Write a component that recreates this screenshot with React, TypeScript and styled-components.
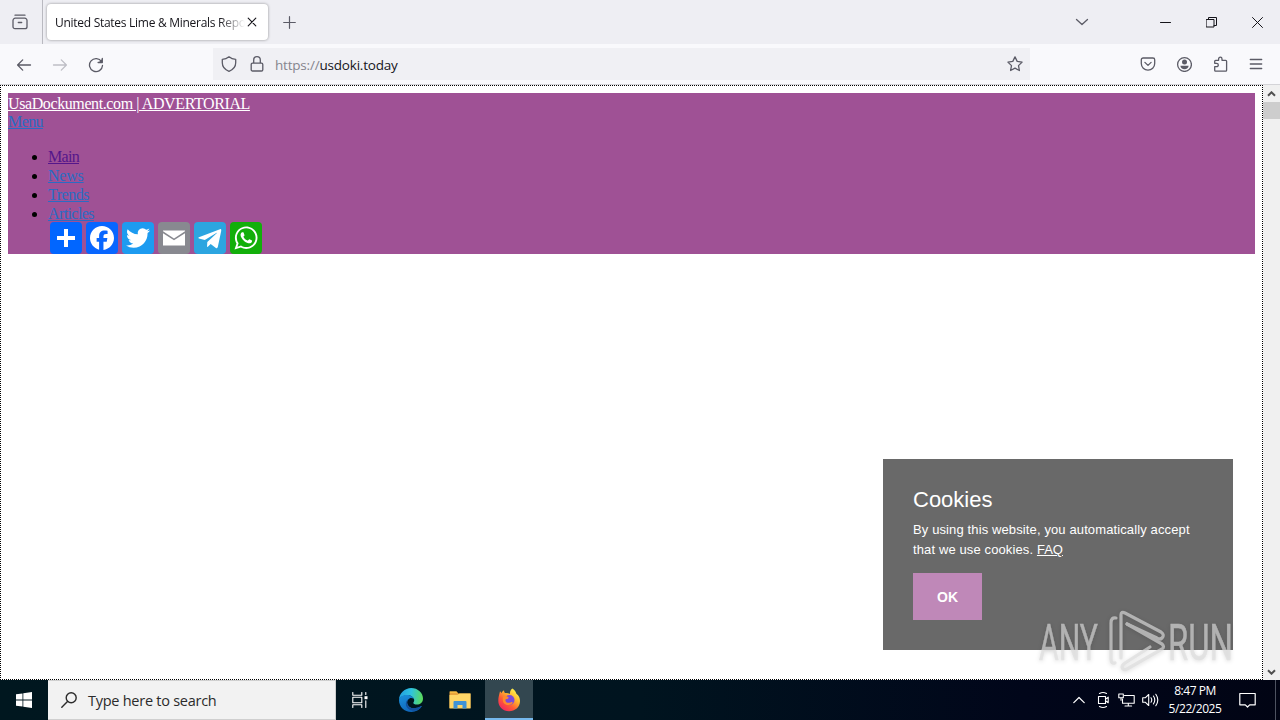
import { ReactNode } from "react";
import styled, { createGlobalStyle, css } from "styled-components";

const GlobalStyle = createGlobalStyle`
  * {
    box-sizing: border-box;
  }

  body {
    margin: 0;
    overflow: hidden;
  }

  svg {
    display: block;
    flex: none;
  }
`;

const Desktop = styled.div`
  display: flex;
  flex-direction: column;
  width: 1280px;
  height: 720px;
  background: #fff;
  font-family: "Open Sans", sans-serif;
`;

const TabBar = styled.header`
  display: flex;
  align-items: center;
  height: 44px;
  background: #eeeef3;
  color: #5b5b66;
`;

const RecentButton = styled.div`
  display: flex;
  align-items: center;
  justify-content: center;
  width: 43px;
  height: 44px;
  padding-right: 3px;
  border-right: 1px solid #b9b9c0;
`;

const Tab = styled.div`
  display: flex;
  align-items: center;
  width: 221px;
  height: 36px;
  margin-left: 4px;
  padding: 0 9px 0 8px;
  border-radius: 4px;
  background: #fff;
  box-shadow: 0 0 3px rgba(0, 0, 0, 0.4);
  color: #15141a;
`;

const TabTitle = styled.span`
  width: 190px;
  padding-top: 2px;
  white-space: nowrap;
  font-size: 12px;
  line-height: 18px;
  letter-spacing: -0.28px;
  mask-image: linear-gradient(to left, transparent, #000 26px);
`;

const NewTab = styled.div`
  margin: 1px 0 0 15px;
`;

const WindowButtons = styled.div`
  display: flex;
  align-items: center;
  margin-left: auto;
  padding-right: 17px;
  color: #15141a;
`;

const WindowButton = styled.div<{ $gap?: number }>`
  margin-left: ${({ $gap = 0 }) => $gap}px;
`;

const NavBar = styled.div`
  display: flex;
  align-items: center;
  height: 40px;
  background: #f9f9fc;
  color: #5b5b66;
`;

const NavButtons = styled.div<{ $end?: boolean }>`
  display: flex;
  align-items: center;
  gap: 20px;
  width: 213px;
  padding: 1px 0 0 16px;

  ${({ $end }) =>
    $end &&
    css`
      width: auto;
      margin-left: auto;
      padding: 0 16px 0 0;
    `}
`;

const UrlBar = styled.div`
  display: flex;
  align-items: center;
  width: 817px;
  height: 32px;
  padding: 0 7px 0 8px;
  background: #f0f0f4;
`;

const Url = styled.span`
  flex: 1;
  margin-left: 10px;
  padding-top: 2px;
  color: #85848d;
  font-size: 13.5px;
  letter-spacing: -0.2px;

  b {
    color: #15141a;
    font-weight: 400;
  }
`;

const Lock = styled.div`
  margin-left: 12px;
`;

const Viewport = styled.div`
  display: flex;
  height: 596px;
  border-top: 1px solid #d4d4d8;
`;

const Page = styled.main`
  position: relative;
  width: 1263px;
  height: 595px;
  padding: 7px 7px 0;
  border: 1px dotted #000;
  background: #fff;
  font-family: "Liberation Serif", serif;
  font-size: 16px;
`;

const SiteHeader = styled.div`
  height: 161px;
  padding-top: 1px;
  background: #9f5195;
  line-height: 19px;
`;

const Line = styled.div`
  height: 18px;
`;

const Link = styled.a<{ $color?: string; $spacing?: number }>`
  color: ${({ $color = "#2a6cc4" }) => $color};
  letter-spacing: ${({ $spacing = 0 }) => $spacing}px;
  text-decoration: underline;
  text-decoration-thickness: 1px;
`;

const Menu = styled.ul`
  margin: 17px 0 0;
  padding: 0 0 0 40px;
`;

const Share = styled.div`
  display: flex;
  gap: 4px;
  margin-top: -1px;
  padding-left: 2px;
`;

const ShareButton = styled.div<{ $bg: string }>`
  width: 32px;
  height: 32px;
  border-radius: 4px;
  background: ${({ $bg }) => $bg};
`;

const CookieBox = styled.div`
  position: absolute;
  top: 373px;
  left: 882px;
  width: 350px;
  height: 191px;
  padding: 28px 30px;
  background: #696969;
  color: #fff;
  font-family: "Liberation Sans", sans-serif;
`;

const CookieTitle = styled.h2`
  margin: 0 0 7px;
  font-size: 22px;
  font-weight: 400;
  line-height: 26px;
`;

const CookieText = styled.p`
  margin: 0 0 13px;
  font-size: 13px;
  line-height: 20px;
  letter-spacing: 0.12px;
  white-space: nowrap;
`;

const OkButton = styled.div`
  width: 69px;
  height: 47px;
  background: #bf88b8;
  font-size: 14px;
  font-weight: 700;
  line-height: 48px;
  text-align: center;
`;

const Watermark = styled.div`
  position: absolute;
  top: 520px;
  left: 1032px;
  filter: drop-shadow(0 1px 2px rgba(0, 0, 0, 0.2));
`;

const ScrollBar = styled.div`
  display: flex;
  flex-direction: column;
  align-items: center;
  justify-content: space-between;
  width: 17px;
  height: 595px;
  background: #f0f0f0;
  color: #505050;
`;

const Thumb = styled.div`
  width: 17px;
  height: 17px;
  margin-bottom: auto;
  background: #cdcdcd;
`;

const ScrollArrow = styled.div`
  display: flex;
  align-items: center;
  justify-content: center;
  width: 17px;
  height: 17px;
`;

const TaskBar = styled.footer`
  display: flex;
  align-items: center;
  height: 40px;
  background: linear-gradient(90deg, #00171f 0%, #00141f 50%, #01061a 80%, #010414 100%);
  color: #fff;
`;

const TaskButton = styled.div<{ $width?: number; $active?: boolean }>`
  display: flex;
  align-items: center;
  justify-content: center;
  width: ${({ $width = 48 }) => $width}px;
  height: 40px;

  ${({ $active }) =>
    $active &&
    css`
      margin-left: 3px;
      border-bottom: 2px solid #76b9ed;
      padding-top: 1px;
      background: #334750;
    `}
`;

const Search = styled.div`
  display: flex;
  align-items: center;
  gap: 11px;
  width: 288px;
  height: 40px;
  padding-left: 13px;
  border: 1px solid #cfcfcf;
  border-width: 1px 1px 1px 0;
  background: #f2f2f2;
  color: #2b2b2b;
  font-size: 14.5px;
  letter-spacing: -0.26px;
`;

const Tray = styled.div`
  display: flex;
  align-items: center;
  height: 40px;
  margin-left: auto;
`;

const TrayIcon = styled.div<{ $gap?: number }>`
  margin-right: ${({ $gap = 0 }) => $gap}px;
`;

const Clock = styled.div`
  width: 56px;
  margin-right: 16px;
  font-size: 12px;
  line-height: 18px;
  letter-spacing: -0.45px;
  text-align: center;
  white-space: nowrap;
`;

const ShowDesktop = styled.div`
  width: 5px;
  height: 40px;
  border-left: 1px solid #4d5260;
`;

interface IconProps {
  size?: number;
  height?: number;
  stroke?: number;
  children: ReactNode;
}

const Icon = ({ size = 16, height, stroke = 1.3, children }: IconProps) => (
  <svg
    width={size}
    height={height || size}
    viewBox={`0 0 ${size} ${height || size}`}
    fill="none"
    stroke="currentColor"
    strokeWidth={stroke}
    strokeLinecap="round"
    strokeLinejoin="round"
  >
    {children}
  </svg>
);

const menuItems = [
  { label: "Main", color: "#55168b", spacing: -0.7 },
  { label: "News", spacing: -0.2 },
  { label: "Trends", spacing: -0.5 },
  { label: "Articles", spacing: -0.6 },
];

const shareItems = [
  {
    name: "share",
    bg: "#0166ff",
    path: "M14 7h4v18h-4z M7 14h18v4H7z",
  },
  {
    name: "facebook",
    bg: "#0866ff",
    path: "M28 16c0-6.627-5.373-12-12-12S4 9.373 4 16c0 5.628 3.875 10.35 9.101 11.647v-7.98h-2.474V16H13.1v-1.58c0-4.085 1.849-5.978 5.859-5.978.76 0 2.072.15 2.608.298v3.325c-.283-.03-.775-.045-1.386-.045-1.967 0-2.728.745-2.728 2.683V16h3.92l-.673 3.667h-3.247v8.245C23.395 27.195 28 22.135 28 16",
  },
  {
    name: "twitter",
    bg: "#1d9bf0",
    path: "M28 8.557a10 10 0 0 1-2.828.775 4.93 4.93 0 0 0 2.166-2.725 9.7 9.7 0 0 1-3.13 1.194 4.92 4.92 0 0 0-3.593-1.55 4.924 4.924 0 0 0-4.794 6.049c-4.09-.21-7.72-2.17-10.15-5.15a4.94 4.94 0 0 0-.665 2.477c0 1.71.87 3.214 2.19 4.1a5 5 0 0 1-2.23-.616v.06c0 2.39 1.7 4.38 3.952 4.83-.414.115-.85.174-1.297.174q-.476-.001-.928-.086a4.935 4.935 0 0 0 4.6 3.42 9.9 9.9 0 0 1-6.114 2.107q-.597 0-1.175-.068a13.95 13.95 0 0 0 7.55 2.213c9.056 0 14.01-7.507 14.01-14.013q0-.32-.015-.637c.96-.695 1.795-1.56 2.455-2.55z",
  },
  {
    name: "email",
    bg: "#888990",
    path: "M5 8.5h22v.8l-11 7.2-11-7.2z M5 11.2l11 7.1 11-7.1V23.5H5z",
  },
  {
    name: "telegram",
    bg: "#2ca5e0",
    path: "M26.6 6.9 4.9 15.2c-.7.3-.6 1 .1 1.2l5.8 1.7L22.3 10.9c.5-.3.8 0 .4.4l-9.4 8.6-.3 5.2c.5 0 .8-.2 1.1-.5l2.6-2.5 5.2 3.9c1 .5 1.6.2 1.9-.9l3.4-16.2c.2-1.3-.1-2.1-.6-2z",
  },
  {
    name: "whatsapp",
    bg: "#12af0a",
    path: "M16.21 4.41C9.973 4.41 4.917 9.465 4.917 15.7c0 2.134.592 4.13 1.62 5.832L4.5 27.59l6.25-2.002a11.24 11.24 0 0 0 5.46 1.404c6.234 0 11.29-5.055 11.29-11.29 0-6.237-5.056-11.292-11.29-11.292m0 20.69c-1.91 0-3.69-.57-5.173-1.553l-3.61 1.156 1.173-3.49a9.35 9.35 0 0 1-1.79-5.512c0-5.18 4.217-9.4 9.4-9.4s9.397 4.22 9.397 9.4c0 5.188-4.214 9.4-9.398 9.4zm5.293-6.832c-.284-.155-1.673-.906-1.934-1.012-.265-.106-.455-.16-.658.12s-.78.91-.954 1.096c-.176.186-.345.203-.628.048-.282-.154-1.2-.494-2.264-1.517-.83-.795-1.373-1.76-1.53-2.055s0-.445.15-.584c.134-.124.3-.326.45-.488.15-.163.203-.28.306-.47.104-.19.06-.36-.005-.506-.066-.147-.59-1.587-.81-2.173-.218-.586-.46-.498-.63-.505-.168-.007-.358-.038-.55-.045-.19-.007-.51.054-.78.332-.277.274-1.05.943-1.1 2.362-.055 1.418.926 2.826 1.064 3.023.137.2 1.874 3.272 4.76 4.537 2.888 1.264 2.9.878 3.43.85.53-.027 1.734-.633 2-1.297s.287-1.24.22-1.363c-.07-.123-.26-.203-.54-.357z",
  },
];

const Tabs = () => (
  <TabBar>
    <RecentButton>
      <Icon>
        <path d="M3 1.2h10M1 6.5A2.3 2.3 0 0 1 3.3 4.2h9.4A2.3 2.3 0 0 1 15 6.5v6.2a2 2 0 0 1-2 2H3a2 2 0 0 1-2-2zM6.3 8.5h3.4" />
      </Icon>
    </RecentButton>
    <Tab>
      <TabTitle>United States Lime &amp; Minerals Repo</TabTitle>
      <Icon size={14} stroke={1.1}>
        <path d="M3.2 3.2l7.6 7.6M10.8 3.2l-7.6 7.6" />
      </Icon>
    </Tab>
    <NewTab>
      <Icon size={13} stroke={1.2}>
        <path d="M6.5.7v11.6M.7 6.5h11.6" />
      </Icon>
    </NewTab>
    <WindowButtons>
      <WindowButton>
        <Icon size={14}>
          <path d="M1.5 4.5L7 9.6l5.5-5.1" stroke="#5b5b66" />
        </Icon>
      </WindowButton>
      <WindowButton $gap={71}>
        <Icon size={11} stroke={1}>
          <path d="M.5 5.5h10" />
        </Icon>
      </WindowButton>
      <WindowButton $gap={35}>
        <Icon size={11} stroke={1}>
          <path d="M.5 2.5h7.5v7.5H.5zM2.5 2.5v-2h8v8h-2.5" strokeLinejoin="miter" />
        </Icon>
      </WindowButton>
      <WindowButton $gap={35}>
        <Icon size={11} stroke={1}>
          <path d="M.5.5l10 10M10.5.5l-10 10" />
        </Icon>
      </WindowButton>
    </WindowButtons>
  </TabBar>
);

const Navigation = () => (
  <NavBar>
    <NavButtons>
      <Icon>
        <path d="M14.5 8H1.7M6.7 2.9L1.6 8l5.1 5.1" />
      </Icon>
      <Icon>
        <path d="M1.5 8h12.8M9.3 2.9L14.4 8l-5.1 5.1" stroke="#bebec5" />
      </Icon>
      <Icon>
        <path d="M13.6 4.8A6.5 6.5 0 1 0 14.5 8.5M14.3 1.3v4.2h-4.2" />
        <path d="M14.3 1.8v3.7h-3.7z" fill="currentColor" stroke="none" />
      </Icon>
    </NavButtons>
    <UrlBar>
      <Icon>
        <path d="M8 .8C6 2.5 3.9 3.2 1.3 3.3v3.5c0 3.9 2.7 7 6.7 8.5 4-1.5 6.7-4.6 6.7-8.5V3.3C12.1 3.2 10 2.5 8 .8z" />
      </Icon>
      <Lock>
        <Icon>
          <path d="M3.5 7.2h9a1.3 1.3 0 0 1 1.3 1.3v5.2a1.3 1.3 0 0 1-1.3 1.3h-9a1.3 1.3 0 0 1-1.3-1.3V8.5a1.3 1.3 0 0 1 1.3-1.3zM4.7 7V4a3.3 3.3 0 0 1 6.6 0v3" />
        </Icon>
      </Lock>
      <Url>
        https://<b>usdoki.today</b>
      </Url>
      <Icon>
        <path d="M8 .9l2.2 4.5 4.9.7-3.6 3.5.9 4.9L8 12.2l-4.4 2.3.9-4.9L.9 6.1l4.9-.7z" />
      </Icon>
    </UrlBar>
    <NavButtons $end>
      <Icon>
        <path d="M3.1 2h9.8a1.8 1.8 0 0 1 1.8 1.8v3.7a6.7 6.7 0 0 1-13.4 0V3.8A1.8 1.8 0 0 1 3.1 2zM4.9 6.4L8 9.4l3.1-3" />
      </Icon>
      <Icon>
        <circle cx="8.5" cy="8.5" r="6.9" />
        <circle cx="8.5" cy="6.1" r="2.5" fill="currentColor" stroke="none" />
        <path d="M4.4 9.7h8.2c0 2.2-1.9 3.5-4.1 3.5s-4.1-1.3-4.1-3.5z" fill="currentColor" stroke="none" />
      </Icon>
      <Icon>
        <path d="M2.7 14.3v-3.6h1.9a1.7 1.7 0 0 0 0-3.4H2.7V5.2a.9.9 0 0 1 .9-.9h3V2.9a1.7 1.7 0 0 1 3.4 0v1.4h3.7a.9.9 0 0 1 .9.9v9.1a.9.9 0 0 1-.9.9H3.6a.9.9 0 0 1-.9-.9z" />
      </Icon>
      <Icon>
        <path d="M2.3 3.5h11.4M2.3 8h11.4M2.3 12.5h11.4" />
      </Icon>
    </NavButtons>
  </NavBar>
);

const CookieNotice = () => (
  <CookieBox>
    <CookieTitle>Cookies</CookieTitle>
    <CookieText>
      By using this website, you automatically accept
      <br />
      that we use cookies.{" "}
      <Link $color="#fff" href="#">
        FAQ
      </Link>
    </CookieText>
    <OkButton>OK</OkButton>
  </CookieBox>
);

const AnyRun = () => (
  <Watermark>
    <svg width="210" height="74" viewBox="0 0 210 74" opacity="0.66">
      <g fill="none" stroke="#dcdcdc" strokeWidth="3.2" strokeLinejoin="round" strokeLinecap="round">
        <path d="M83 12q-5-1-5 5v36q0 5 4 4" />
        <path d="M88 52V9q0-4 4-2l36 19q4 3 1 6-2 2-5 0L94 18" />
        <path d="M94 18l35 20q3 3 0 5L94 63q-4 2-5-2 0-2 3-4l25-16" />
      </g>
      <g fill="#dcdcdc" stroke="#dcdcdc" strokeWidth="0.5" fontFamily="Roboto, sans-serif" fontSize="50">
        <text x="6" y="54" textLength="59" lengthAdjust="spacingAndGlyphs">
          ANY
        </text>
        <text x="135" y="54" textLength="65" lengthAdjust="spacingAndGlyphs">
          RUN
        </text>
      </g>
    </svg>
  </Watermark>
);

const EdgeIcon = () => (
  <svg width="24" height="24" viewBox="0 0 24 24">
    <defs>
      <linearGradient id="edge-top" x1="0" y1=".3" x2="1" y2=".4">
        <stop offset="0" stopColor="#219ee0" />
        <stop offset=".5" stopColor="#2fc3df" />
        <stop offset="1" stopColor="#5bdb5b" />
      </linearGradient>
      <linearGradient id="edge-side" x1="0" y1="0" x2=".5" y2="1">
        <stop offset="0" stopColor="#1b91dc" />
        <stop offset="1" stopColor="#0f65b8" />
      </linearGradient>
    </defs>
    <path d="M0 12C0 5 6 0 12.2 0 19 0 24 5 24 10.6c0 4-3 6-6 6-2.4 0-3.7-.8-3.7-1.6 0-.6.9-.9.9-2.7C15.2 9.3 12 7.2 8.5 7.2 3.5 7.2.6 9.7 0 12z" fill="url(#edge-top)" />
    <path d="M0 12c.4-3 3.6-5 8-5 3.4 0 6.5 1.8 7 4.3-1.2-1.3-3-1.6-4.5-.9-4.6 2-2.5 11.600 7.500 9.400 1.600-.3 3.200-1.200 4.100-1.700.5-.2.7.1.5.5C20.500 21.900 16.800 24 12.500 24 5 24 0 18.500 0 12z" fill="url(#edge-side)" />
    <path d="M10.5 10.4c-4.600 2-3 12 7.500 9.400 1.600-.3 3.200-1.200 4.100-1.700.5-.2.7.1.5.5-2 3.400-6 4.500-9 4.100C6 21.500 4.500 13 10.500 10.400z" fill="#134f9c" />
  </svg>
);

const FolderIcon = () => (
  <svg width="22" height="20" viewBox="0 0 22 20">
    <path d="M.5 1.500h7l2 2h12V18H.5z" fill="#e8a33d" />
    <path d="M.5 5h8l2-1.500h11v15H.5z" fill="#ffd667" />
    <path d="M4.500 18.500V12q0-1 1-1h11q1 0 1 1v6.500h-4V15h-5v3.500z" fill="#3f93d6" />
    <path d="M1 1.500h6.500l1 1.500H1z" fill="#f6bb43" />
  </svg>
);

const FirefoxIcon = () => (
  <svg width="24" height="24" viewBox="0 0 24 24">
    <defs>
      <linearGradient id="fox" x1=".85" y1=".1" x2=".2" y2=".95">
        <stop offset="0" stopColor="#fff44f" />
        <stop offset=".35" stopColor="#ffb22e" />
        <stop offset=".65" stopColor="#ff5b36" />
        <stop offset="1" stopColor="#f2265f" />
      </linearGradient>
    </defs>
    <path d="M15.500.5c2.200 1.500 3.500 3.600 3.900 5.300 2.600 1.600 3.600 4.600 3.600 7.200C23 19 18 23.300 12 23.300S1.300 19 1.300 12.800C1.300 9 2.200 6.600 3 3.200c.8.500 1.200 1.300 1.400 2 .8-1.700 1.800-2.400 2.600-2.900 0 1.200.3 2.100.9 2.700 1.700-.3 3.700.1 5.100 1C12.800 3.500 13.700 1.500 15.500.5z" fill="url(#fox)" />
    <circle cx="12.5" cy="12" r="5" fill="#7b4bda" />
    <path d="M7 7.500c2 .2 3.500.9 4.700 2 0 1.500-2.700 1.400-3.300 2.400 0 2 1.600 3 3.400 2.900 1.700-.1 2.500-1 3.500-.8.700.3.300 1.300-.7 2.100-3.300 2.300-8.600.6-8.800-4C5.700 10 6.200 8.500 7 7.500z" fill="#ff8a2b" />
  </svg>
);

const Taskbar = () => (
  <TaskBar>
    <TaskButton>
      <svg width="16" height="16" viewBox="0 0 16 16" fill="#fff">
        <path d="M0 2.3L6.5 1.4v6.2H0zM7.3 1.3L16 0v7.6H7.3zM0 8.4h6.5v6.2L0 13.7zM7.3 8.4H16V16l-8.700-1.300z" />
      </svg>
    </TaskButton>
    <Search>
      <Icon size={16} stroke={1.4}>
        <circle cx="10.2" cy="5.8" r="5" />
        <path d="M6.5 9.5L.8 15.2" />
      </Icon>
      Type here to search
    </Search>
    <TaskButton>
      <Icon stroke={1.1}>
        <path d="M.8.5v2.700h9V.5M.8 15.500v-2.700h9v2.700M.8 5.300h9v5.400h-9zM13.800.5v2M13.800 8.800v6.700" />
        <path d="M12.500 4.200h3v3h-3z" fill="currentColor" stroke="none" />
      </Icon>
    </TaskButton>
    <TaskButton $width={54}>
      <EdgeIcon />
    </TaskButton>
    <TaskButton $width={44}>
      <FolderIcon />
    </TaskButton>
    <TaskButton $active>
      <FirefoxIcon />
    </TaskButton>
    <Tray>
      <TrayIcon $gap={12}>
        <Icon size={12} height={8} stroke={1.2}>
          <path d="M.8 6.7L6 1.500l5.200 5.200" />
        </Icon>
      </TrayIcon>
      <TrayIcon $gap={9}>
        <Icon size={12} height={18} stroke={1.1}>
          <path d="M1.500 5.500h7v7h-7zM8.500 8.200l2.700-2v5.600L8.500 9.800M2.500 2.500Q6 .5 9.500 2.500M2.500 15.500q3.500 2 7 0" />
        </Icon>
      </TrayIcon>
      <TrayIcon $gap={7}>
        <Icon size={17} height={14} stroke={1.1}>
          <path d="M6.500 2.500h9.700v7.700H4.500V6M10.300 10.200v2.700M7 13h6.600M.8 1h4.500v3.800H.8zM3 4.800v2.400" />
        </Icon>
      </TrayIcon>
      <TrayIcon $gap={8}>
        <Icon size={17} height={14} stroke={1.1}>
          <path d="M.7 4.800h2.500l3.500-3.300v11L3.200 9.200H.7zM9 4.800q1.500 2.200 0 4.400M11.400 3q2.800 4 0 8M13.800 1.300q4 5.700 0 11.400" />
        </Icon>
      </TrayIcon>
      <Clock>
        8:47 PM
        <br />
        5/22/2025
      </Clock>
      <TrayIcon $gap={19}>
        <Icon size={17} stroke={1.2}>
          <path d="M.8 1.500h15.400v11.300h-5.500L8.500 15l-2.200-2.200H.8z" />
        </Icon>
      </TrayIcon>
      <ShowDesktop />
    </Tray>
  </TaskBar>
);

const App = () => {
  return (
    <Desktop>
      <GlobalStyle />
      <Tabs />
      <Navigation />
      <Viewport>
        <Page>
          <SiteHeader>
            <Line>
              <Link $color="#fff" $spacing={-0.4} href="#">
                UsaDockument.com | ADVERTORIAL
              </Link>
            </Line>
            <Line>
              <Link $spacing={-0.6} href="#">
                Menu
              </Link>
            </Line>
            <Menu>
              {menuItems.map((item) => (
                <li key={item.label}>
                  <Link $color={item.color} $spacing={item.spacing} href="#">
                    {item.label}
                  </Link>
                </li>
              ))}
              <Share>
                {shareItems.map((item) => (
                  <ShareButton key={item.name} $bg={item.bg}>
                    <svg width="32" height="32" viewBox="0 0 32 32" fill="#fff">
                      <path d={item.path} />
                    </svg>
                  </ShareButton>
                ))}
              </Share>
            </Menu>
          </SiteHeader>
          <CookieNotice />
          <AnyRun />
        </Page>
        <ScrollBar>
          <ScrollArrow>
            <Icon size={9} height={6} stroke={2}>
              <path d="M1 4.8L4.5 1.3 8 4.8" strokeLinecap="butt" strokeLinejoin="miter" />
            </Icon>
          </ScrollArrow>
          <Thumb />
          <ScrollArrow>
            <Icon size={9} height={6} stroke={2}>
              <path d="M1 1.2l3.5 3.5L8 1.2" strokeLinecap="butt" strokeLinejoin="miter" />
            </Icon>
          </ScrollArrow>
        </ScrollBar>
      </Viewport>
      <Taskbar />
    </Desktop>
  );
};

export default App;
